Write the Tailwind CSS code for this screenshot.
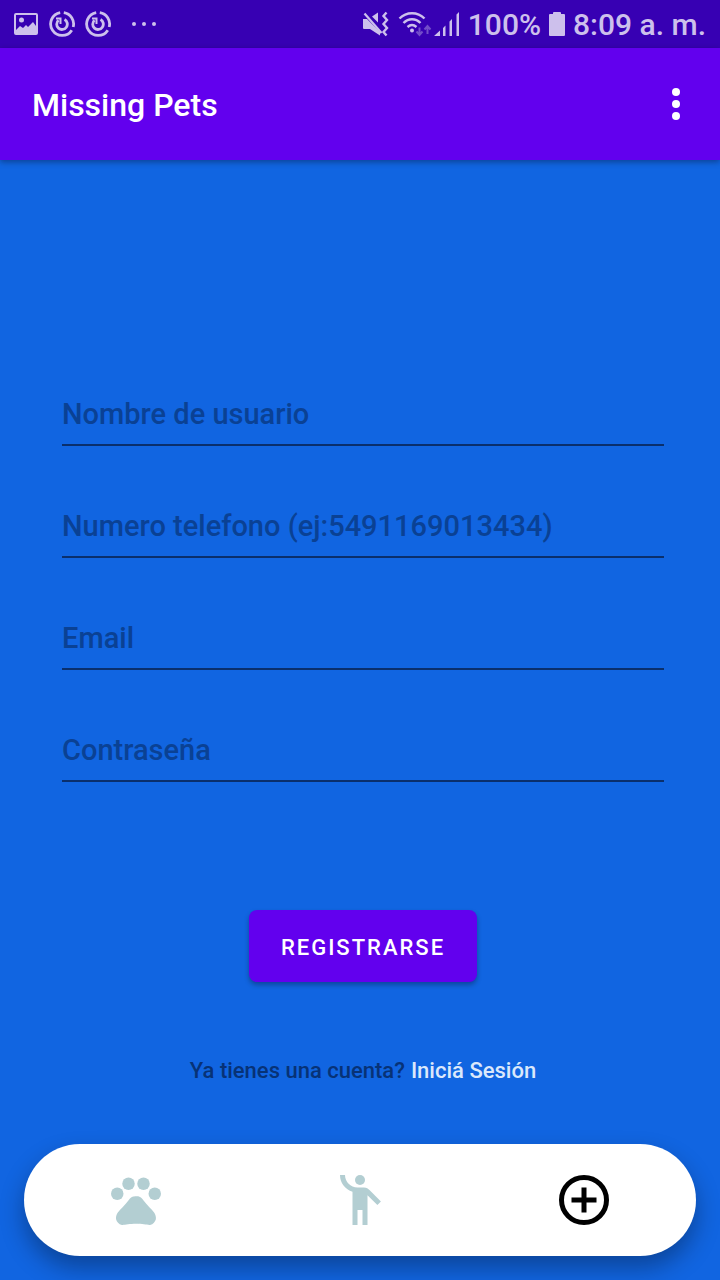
<!DOCTYPE html>
<html lang="es">
<head>
<meta charset="utf-8">
<meta name="viewport" content="width=device-width, initial-scale=1">
<title>Missing Pets</title>
<script src="https://cdn.jsdelivr.net/npm/@tailwindcss/browser@4"></script>
</head>
<body class="flex min-h-screen flex-col bg-[#1165e1] font-['Roboto',sans-serif] font-medium">

<!-- Status bar -->
<div class="flex h-12 items-center justify-between bg-[#3700b3] pr-3.5 pl-3 text-[#cdc0ec]">
  <div class="flex items-center gap-2">
    <svg class="size-7" viewBox="0 0 28 28" fill="currentColor" aria-hidden="true">
      <path fill-rule="evenodd" d="M4 3h20a2 2 0 0 1 2 2v18a2 2 0 0 1-2 2H4a2 2 0 0 1-2-2V5a2 2 0 0 1 2-2zM4 5v15l4-4 3 2 3-3 2 2 5-5 3 4V5zM9.500 7.500a2.500 2.500 0 1 1 0 5 2.500 2.500 0 0 1 0-5z"/>
    </svg>
    <svg class="size-7" viewBox="0 0 28 28" fill="none" stroke="currentColor" stroke-width="2.800" aria-hidden="true">
      <path d="M12.200 2.600A11.500 11.500 0 1 0 23.800 20.200M15.800 2.600A11.500 11.500 0 0 1 25.200 17M16.500 9.500A5.300 5.300 0 1 1 10.500 10.200"/>
      <path stroke-width="2" d="M8 8.500h4.500v5.500"/>
    </svg>
    <svg class="size-7" viewBox="0 0 28 28" fill="none" stroke="currentColor" stroke-width="2.800" aria-hidden="true">
      <path d="M12.200 2.600A11.500 11.500 0 1 0 23.800 20.200M15.800 2.600A11.500 11.500 0 0 1 25.200 17M16.500 9.500A5.300 5.300 0 1 1 10.500 10.200"/>
      <path stroke-width="2" d="M8 8.500h4.500v5.500"/>
    </svg>
    <svg class="ml-2 h-7 w-8" viewBox="0 0 32 28" fill="currentColor" aria-hidden="true">
      <circle cx="6" cy="14" r="2"/><circle cx="16" cy="14" r="2"/><circle cx="26" cy="14" r="2"/>
    </svg>
  </div>
  <div class="flex items-center gap-2 text-[30px] leading-9">
    <svg class="h-9 w-25" viewBox="0 0 100 36" fill="none" stroke="currentColor" aria-hidden="true">
      <!-- muted speaker with vibration wave -->
      <path fill="currentColor" stroke="none" d="M3 13h4l13 13v3.500L10 23H4a1 1 0 0 1-1-1zM12 10.500 18 6.500V16.500z"/>
      <path stroke-width="2.200" d="M4.500 7.500 21.500 27"/>
      <path stroke-width="2.400" d="M26.500 6.500 23.500 10l3.500 4-3.500 4 3.500 4-3.500 4 3 3.500"/>
      <!-- wifi -->
      <path stroke-width="2.400" d="M39.500 12.500c7-7 18-7 25 0M43.500 17c5-5 12-5 17 0M47.500 21c3-2.600 6-2.600 9 0"/>
      <circle cx="52" cy="24.500" r="2" fill="currentColor" stroke="none"/>
      <path stroke-width="2" opacity=".4" d="M59.500 21.500v7.500M56.500 25.500l3 3.500 3-3.500M67.500 28v-7.500M64.500 23.500l3-3.500 3 3.500"/>
      <!-- signal -->
      <path fill="currentColor" stroke="none" d="M74 30l6-5.500V30zM83 22l2.500-2.500V30H83zM89.500 15.500l2.500-2.500v17h-2.500zM96.500 8.500l2.500-2.500v24h-2.500z"/>
    </svg>
    <span class="pt-0.5">100%</span>
    <svg class="h-6 w-4" viewBox="0 0 16 24" fill="currentColor" aria-hidden="true"><path d="M5 0h6a1 1 0 0 1 1 1v1h3a1 1 0 0 1 1 1v20a1 1 0 0 1-1 1H1a1 1 0 0 1-1-1V3a1 1 0 0 1 1-1h3V1a1 1 0 0 1 1-1z"/></svg>
    <span class="pt-0.5">8:09 a. m.</span>
  </div>
</div>

<header class="flex h-28 items-center justify-between bg-[#6200ee] pr-5 pl-8 text-white shadow-[0_2px_6px_rgba(0,0,0,0.35)]">
  <h1 class="pt-0.5 text-[32px] leading-10">Missing Pets</h1>
  <button type="button" class="flex h-12 w-12 items-center justify-center" aria-label="Más opciones">
    <svg class="size-12" viewBox="0 0 24 24" fill="currentColor"><circle cx="12" cy="6" r="2"/><circle cx="12" cy="12" r="2"/><circle cx="12" cy="18" r="2"/></svg>
  </button>
</header>

<main class="flex grow flex-col">
  <form class="flex flex-col gap-10 pt-[214px] pr-14 pl-[62px]">
    <input type="text" aria-label="Nombre de usuario" placeholder="Nombre de usuario" class="h-18 border-b-2 border-[#0a2f6c] pt-2.5 text-[29px] text-black/80 outline-none placeholder:text-[#0a4194]">
    <input type="tel" aria-label="Numero telefono" placeholder="Numero telefono (ej:5491169013434)" class="h-18 border-b-2 border-[#0a2f6c] pt-2.5 text-[29px] text-black/80 outline-none placeholder:text-[#0a4194]">
    <input type="email" aria-label="Email" placeholder="Email" class="h-18 border-b-2 border-[#0a2f6c] pt-2.5 text-[29px] text-black/80 outline-none placeholder:text-[#0a4194]">
    <input type="password" aria-label="Contraseña" placeholder="Contraseña" class="h-18 border-b-2 border-[#0a2f6c] pt-2.5 text-[29px] text-black/80 outline-none placeholder:text-[#0a4194]">
    <button type="submit" class="mt-[88px] h-18 self-center rounded-lg bg-[#6200ee] px-8 pt-0.5 text-[22px] tracking-[2px] text-white shadow-[0_3px_5px_rgba(0,0,0,0.3)]">REGISTRARSE</button>
  </form>
  <p class="mt-[73px] flex justify-center gap-1.5 pr-14 pl-[62px] text-[22px] leading-8 text-[#073276]">
    <span>Ya tienes una cuenta?</span>
    <a href="#" class="text-[#dbe8fb]">Iniciá Sesión</a>
  </p>
</main>

<nav class="mx-6 mt-8 mb-6 grid h-28 grid-cols-3 rounded-full bg-white text-[#b3ced2] shadow-[0_12px_24px_rgba(0,0,0,0.32)]">
  <a href="#" class="flex items-center justify-center" aria-label="Mascotas">
    <svg class="size-15" viewBox="0 0 24 24" fill="currentColor"><circle cx="4.500" cy="9.500" r="2.500"/><circle cx="9" cy="5.500" r="2.500"/><circle cx="15" cy="5.500" r="2.500"/><circle cx="19.500" cy="9.500" r="2.500"/><path d="M17.340 14.860c-.87-1.020-1.600-1.890-2.480-2.910-.46-.54-1.050-1.080-1.750-1.320-.11-.04-.22-.07-.33-.09-.25-.04-.52-.04-.78-.04s-.53 0-.79.050c-.11.020-.22.050-.33.090-.7.240-1.280.780-1.750 1.320-.87 1.020-1.600 1.890-2.480 2.910-1.310 1.310-2.920 2.760-2.620 4.790.29 1.020 1.020 2.030 2.330 2.320.73.150 3.060-.44 5.540-.44h.18c2.480 0 4.810.580 5.540.440 1.310-.29 2.040-1.310 2.330-2.320.31-2.040-1.300-3.490-2.610-4.800z"/></svg>
  </a>
  <a href="#" class="flex items-center justify-center" aria-label="Perfil">
    <svg class="size-15" viewBox="0 0 24 24" fill="currentColor"><circle cx="12" cy="4" r="2"/><path d="M15.890 8.110C15.500 7.720 14.830 7 13.530 7H11C8.240 7 6 4.760 6 2H4c0 3.160 2.110 5.840 5 6.710V22h2v-6h2v6h2V10.050L18.950 14l1.410-1.410-4.470-4.480z"/></svg>
  </a>
  <a href="#" class="flex items-center justify-center text-black" aria-label="Agregar">
    <svg class="size-15" viewBox="0 0 24 24" fill="none" stroke="currentColor" stroke-width="2"><circle cx="12" cy="12" r="9"/><path d="M12 7v10M7 12h10"/></svg>
  </a>
</nav>
</body>
</html>
